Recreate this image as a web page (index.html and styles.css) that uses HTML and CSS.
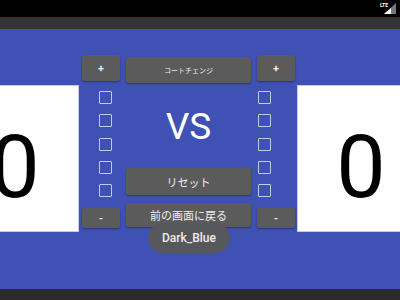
FILE: index.html
```html
<!DOCTYPE html>
<html lang="ja">
<head>
    <meta charset="UTF-8">
    <meta name="viewport" content="width=device-width, initial-scale=1.0">
    <title>Score Board</title>
    <link rel="stylesheet" href="styles.css">
</head>
<body>
    <div class="status-bar">
        <span class="lte">LTE</span>
        <svg class="signal" width="14" height="12" viewBox="0 0 14 12">
            <polygon points="1,11 13,11 13,0" fill="#777"/>
            <polygon points="1,11 8,11 8,5" fill="#fff"/>
        </svg>
    </div>
    <div class="action-bar"></div>
    <div class="main">
        <div class="row">
            <div class="score-box left"><span class="score">0</span></div>
            <div class="side-col left-col">
                <button class="btn btn-plus">+</button>
                <div class="checks">
                    <span class="check"></span>
                    <span class="check"></span>
                    <span class="check"></span>
                    <span class="check"></span>
                    <span class="check"></span>
                </div>
                <button class="btn btn-minus">-</button>
            </div>
            <div class="center-col">
                <button class="btn btn-court">コートチェンジ</button>
                <div class="vs">VS</div>
                <button class="btn btn-reset">リセット</button>
                <button class="btn btn-back">前の画面に戻る</button>
            </div>
            <div class="side-col right-col">
                <button class="btn btn-plus">+</button>
                <div class="checks">
                    <span class="check"></span>
                    <span class="check"></span>
                    <span class="check"></span>
                    <span class="check"></span>
                    <span class="check"></span>
                </div>
                <button class="btn btn-minus">-</button>
            </div>
            <div class="score-box right"><span class="score">0</span></div>
        </div>
        <div class="toast">Dark_Blue</div>
    </div>
    <div class="nav-bar"></div>
</body>
</html>
```

FILE: styles.css
```css
body {
    margin: 0;
    width: 400px;
    height: 300px;
    overflow: hidden;
    font-family: Roboto, "Noto Sans CJK JP", sans-serif;
    background: #3f51b5;
}

.status-bar {
    height: 17px;
    background: #000;
    display: flex;
    justify-content: flex-end;
    align-items: flex-start;
    padding-right: 3px;
    box-sizing: border-box;
}

.lte {
    color: #fff;
    font-size: 5px;
    font-weight: bold;
    line-height: 5px;
    margin-top: 3px;
    margin-right: -5px;
}

.signal {
    margin-top: 3px;
}

.action-bar {
    height: 11px;
    background: #333;
    border-bottom: 1px solid #3b3422;
}

.main {
    position: relative;
    height: 260px;
    overflow: hidden;
}

.row {
    display: flex;
    align-items: flex-start;
    padding-top: 26px;
}

.score-box {
    flex: none;
    width: 128px;
    height: 147px;
    margin-top: 30px;
    background: #fff;
    border: 1px solid #c5cae9;
    box-sizing: border-box;
    display: flex;
    align-items: center;
    justify-content: center;
}

.score-box.left {
    margin-left: -49px;
    margin-right: 3px;
}

.score-box.right {
    margin-left: 2px;
}

.score {
    font-size: 88px;
    line-height: 1;
    color: #000;
    margin-top: 16px;
}

.btn {
    display: block;
    border: none;
    background: #5b5b5b;
    color: #eee;
    font-family: Roboto, "Noto Sans CJK JP", sans-serif;
    border-radius: 2px;
    box-shadow: 0 1px 2px rgba(0, 0, 0, 0.35);
    padding: 0;
}

.side-col {
    flex: none;
    width: 38px;
    display: flex;
    flex-direction: column;
}

.btn-plus {
    width: 38px;
    height: 26px;
    font-size: 11px;
    font-weight: bold;
}

.btn-minus {
    width: 38px;
    height: 20px;
    margin-top: 11px;
    font-size: 10px;
    font-weight: bold;
}

.checks {
    display: flex;
    flex-direction: column;
    gap: 10.3px;
    margin-top: 10px;
}

.check {
    display: block;
    width: 13px;
    height: 13px;
    border: 1.5px solid #c5cae9;
    border-radius: 1px;
    box-sizing: border-box;
}

.left-col .check {
    margin-left: 17px;
}

.right-col .check {
    margin-left: 1px;
}

.center-col {
    flex: none;
    width: 125px;
    margin: 2px 6px 0;
    display: flex;
    flex-direction: column;
}

.btn-court {
    height: 26px;
    font-size: 7px;
}

.vs {
    height: 85px;
    line-height: 88px;
    text-align: center;
    color: #fff;
    font-size: 37px;
}

.btn-reset {
    height: 27px;
    font-size: 11px;
}

.btn-back {
    height: 24px;
    margin-top: 8px;
    font-size: 11px;
}

.toast {
    position: absolute;
    left: 148px;
    top: 194px;
    width: 82px;
    height: 30px;
    border-radius: 15px;
    background: #56585c;
    color: #eee;
    font-size: 12px;
    font-weight: 500;
    line-height: 30px;
    text-align: center;
}

.nav-bar {
    height: 11px;
    background: #2b2b2b;
}
```
